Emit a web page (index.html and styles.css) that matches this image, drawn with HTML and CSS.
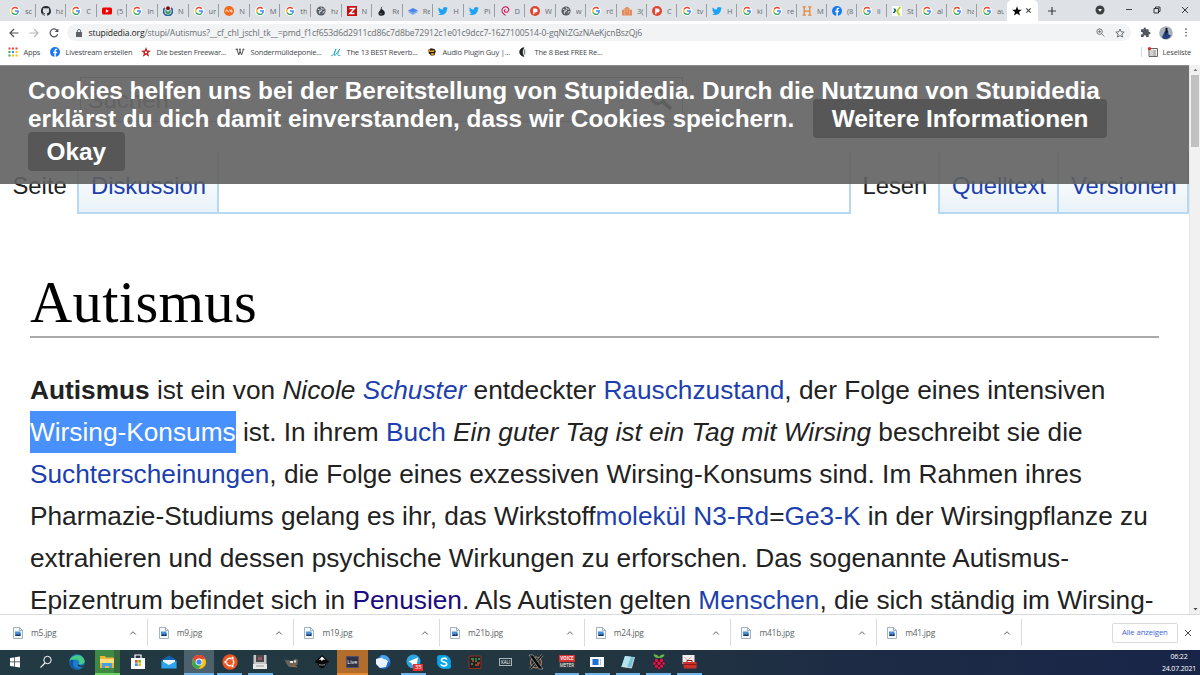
FILE: index.html
```html
<!DOCTYPE html>
<html lang="de">
<head>
<meta charset="utf-8">
<title>Autismus</title>
<link rel="stylesheet" href="styles.css">
</head>
<body>
<svg class="defs" aria-hidden="true">
  <symbol id="g" viewBox="0 0 16 16"><circle cx="8" cy="8" r="8" fill="#fff"/><g fill="none" stroke-width="2.2"><path d="M12.2 4.3A5.3 5.3 0 0 0 3.3 5.6" stroke="#ea4335"/><path d="M3.3 5.6a5.3 5.3 0 0 0 0 4.8" stroke="#fbbc05"/><path d="M3.3 10.4a5.3 5.3 0 0 0 8 1.9" stroke="#34a853"/><path d="M11.3 12.3A5 5 0 0 0 13.2 8H8" stroke="#4285f4"/></g></symbol>
  <symbol id="github" viewBox="0 0 16 16"><path fill="#24292e" d="M8 0a8 8 0 0 0-2.5 15.6c.4 0 .5-.2.5-.4v-1.500c-2.200.5-2.700-1-2.700-1-.4-.9-.9-1.200-.9-1.200-.7-.5.100-.5.100-.5.800.1 1.200.8 1.200.8.700 1.300 1.900.9 2.300.7.100-.5.300-.9.500-1.100-1.800-.2-3.600-.9-3.600-4 0-.9.300-1.600.8-2.100-.1-.200-.4-1 .1-2.100 0 0 .7-.2 2.200.8a7.600 7.600 0 0 1 4 0c1.500-1 2.200-.8 2.200-.8.500 1.100.2 1.900.1 2.100.5.600.8 1.300.8 2.100 0 3.100-1.900 3.800-3.700 4 .3.200.6.700.6 1.500v2.200c0 .2.100.5.600.4A8 8 0 0 0 8 0z"/></symbol>
  <symbol id="yt" viewBox="0 0 16 16"><rect y="2.500" width="16" height="11" rx="2.500" fill="#f00000"/><path d="M6.200 5.300v5.400L11 8z" fill="#fff"/></symbol>
  <symbol id="wm" viewBox="0 0 16 16"><path d="M3 3a7.200 7.200 0 1 0 10 0" fill="none" stroke="#255e95" stroke-width="2.500"/><path d="M4.500 5.500a4.500 4.500 0 1 0 7 0L8 10z" fill="#339966"/><circle cx="8" cy="3.500" r="3" fill="#990000"/></symbol>
  <symbol id="rs" viewBox="0 0 16 16"><circle cx="8" cy="8" r="8" fill="#f26a1b"/><path d="M3 9.500V6.500h2v1.500h2v2M8 6.500h2v3M13 6.500h-2v1.500h2v1.500h-2" fill="none" stroke="#fff" stroke-width="1"/></symbol>
  <symbol id="globe" viewBox="0 0 16 16"><circle cx="8" cy="8" r="7.300" fill="#53595f"/><path d="M3 5l3 1.500h3L8 9H5l1 3.500M8 2l1 2.500 4 .5M11 12l1-3h2" fill="none" stroke="#dee1e6" stroke-width="1.500"/></symbol>
  <symbol id="z" viewBox="0 0 16 16"><path d="M0 0h16v16H0z" fill="#c80e0e"/><path d="M4 4h8l-7.500 8H12" fill="none" stroke="#fff" stroke-width="2.300"/></symbol>
  <symbol id="drop" viewBox="0 0 16 16"><path d="M9 0L7 4c1 2 6 3 5.500 8-.5 4-8.500 5-10 1C1 9 7 7 6 3z" fill="#1e2328"/><path d="M4 11c1 2 3 2 4 1" stroke="#aaa" fill="none"/></symbol>
  <symbol id="layers" viewBox="0 0 16 16"><path d="M0 7l8-4 8 4-8 4z" fill="#4c85ed"/><path d="M1 8v2l7 4 7-4V8l-7 3.500z" fill="#6e9df1"/></symbol>
  <symbol id="tw" viewBox="0 0 16 16"><path fill="#1da1f2" d="M16 3.500l-1.700 1.400C14.500 10 10.500 14.500 5 14.500c-2 0-3.700-.5-5-1.400 1.800.1 3.400-.4 4.700-1.400-1.500 0-2.600-1-3-2.300h1.400C1.600 9 .6 7.700.6 6.200l1.400.4C.6 5.500.2 3.700 1.100 2.200c1.700 2 4 3.300 6.800 3.400C7.400 3.300 9 1.500 11.100 1.500c1 0 1.800.4 2.400 1l2-.7-1.300 1.900z"/></symbol>
  <symbol id="deb" viewBox="0 0 16 16"><path d="M9 15C4 12.500 1.500 8 4 4s8-3.500 9.500 0-1 6.500-4 6S6 6 9 5.500" fill="none" stroke="#cf1450" stroke-width="1.700"/></symbol>
  <symbol id="pat" viewBox="0 0 16 16"><circle cx="8" cy="8" r="8" fill="#e0452f"/><path d="M5 13V4h4a3 3 0 0 1 0 6.500H7V13z" fill="#fff"/></symbol>
  <symbol id="castle" viewBox="0 0 16 16"><path d="M0 6h4V3h2V1.500h4V3h2v3h4v9H0z" fill="#e38b5b"/><path d="M4 7v7M12 7v7M6.500 8.500h3M6 5h4" stroke="#f3c4a8" stroke-width=".8"/></symbol>
  <symbol id="h" viewBox="0 0 16 16"><path d="M1 1.500h5M10 1.500h5M1 14.500h5M10 14.500h5M3.500 1.500v13M12.500 1.500v13M3.500 8h9" stroke="#e2853b" stroke-width="2"/></symbol>
  <symbol id="fb" viewBox="0 0 16 16"><circle cx="8" cy="8" r="8" fill="#1877f2"/><path d="M7 16v-6H5V7.700h2V6c0-2.300 1.200-3.300 3-3.300l1.500.1v2h-1C9.500 4.800 9.300 5.400 9.300 6v1.700h2.200L11.100 10H9.300v6z" fill="#fff"/></symbol>
  <symbol id="xing" viewBox="0 0 16 16"><path d="M0 0h16v16H0z" fill="#fff"/><path d="M2 4h3l2 3-3 4H1l3-4z" fill="#006567"/><path d="M11.500 1h3.300L10 8.500l3.500 6.500h-3.300L6.700 8.500z" fill="#b8d30b"/></symbol>
  <symbol id="file" viewBox="0 0 10 12"><path d="M.5.5h6l3 3v8h-9z" fill="#f7fafc" stroke="#8da0af" stroke-width=".8"/><path d="M6.500.5v3h3" fill="none" stroke="#8da0af" stroke-width=".8"/><path d="M2 4.500h5.500v4.500H2z" fill="#4b8ed6"/><path d="M2 9l2-2 1.500 1L7.500 6v3z" fill="#173765"/></symbol>
  <symbol id="up" viewBox="0 0 8 8"><path d="M1.200 5.500L4 2.700l2.800 2.800" fill="none" stroke="#5f6368" stroke-width="1"/></symbol>
</svg>

<header class="tabstrip">
  <div class="tab"><svg><use href="#g"/></svg><span>sc</span></div>
  <div class="tab"><svg><use href="#github"/></svg><span>ha</span></div>
  <div class="tab"><svg><use href="#g"/></svg><span>C</span></div>
  <div class="tab"><svg><use href="#yt"/></svg><span>(5</span></div>
  <div class="tab"><svg><use href="#g"/></svg><span>in</span></div>
  <div class="tab"><svg><use href="#wm"/></svg><span>N</span></div>
  <div class="tab"><svg><use href="#g"/></svg><span>un</span></div>
  <div class="tab"><svg><use href="#rs"/></svg><span>N</span></div>
  <div class="tab"><svg><use href="#g"/></svg><span>M</span></div>
  <div class="tab"><svg><use href="#g"/></svg><span>th</span></div>
  <div class="tab"><svg><use href="#globe"/></svg><span>ha</span></div>
  <div class="tab"><svg><use href="#z"/></svg><span>N</span></div>
  <div class="tab"><svg><use href="#drop"/></svg><span>Re</span></div>
  <div class="tab"><svg><use href="#layers"/></svg><span>Re</span></div>
  <div class="tab"><svg><use href="#tw"/></svg><span>H</span></div>
  <div class="tab"><svg><use href="#tw"/></svg><span>Pi</span></div>
  <div class="tab"><svg><use href="#deb"/></svg><span>D</span></div>
  <div class="tab"><svg><use href="#pat"/></svg><span>W</span></div>
  <div class="tab"><svg><use href="#globe"/></svg><span>w</span></div>
  <div class="tab"><svg><use href="#g"/></svg><span>rö</span></div>
  <div class="tab narrow"><svg><use href="#castle"/></svg><span>3(</span></div>
  <div class="tab narrow"><svg><use href="#pat"/></svg><span>C</span></div>
  <div class="tab narrow"><svg><use href="#g"/></svg><span>tv</span></div>
  <div class="tab narrow"><svg><use href="#tw"/></svg><span>H</span></div>
  <div class="tab narrow"><svg><use href="#g"/></svg><span>ki</span></div>
  <div class="tab narrow"><svg><use href="#g"/></svg><span>re</span></div>
  <div class="tab narrow"><svg><use href="#h"/></svg><span>M</span></div>
  <div class="tab narrow"><svg><use href="#fb"/></svg><span>(8</span></div>
  <div class="tab narrow"><svg><use href="#g"/></svg><span>li</span></div>
  <div class="tab narrow"><svg><use href="#xing"/></svg><span>St</span></div>
  <div class="tab narrow"><svg><use href="#g"/></svg><span>al</span></div>
  <div class="tab narrow"><svg><use href="#g"/></svg><span>ha</span></div>
  <div class="tab narrow last"><svg><use href="#g"/></svg><span>au</span></div>
  <div class="tab-active">
    <svg class="star" viewBox="0 0 16 16"><path d="M8 .5l2 5.300 5.700.2-4.500 3.500 1.600 5.500L8 11.800 3.200 15l1.600-5.500L.3 6 6 5.800z"/></svg>
    <svg class="x" viewBox="0 0 8 8"><path d="M1.500 1.500l5 5M6.500 1.500l-5 5" stroke="#3c4043" stroke-width="1.200"/></svg>
  </div>
  <svg class="plus" viewBox="0 0 8 8"><path d="M4 0v8M0 4h8" stroke="#3c4043" stroke-width="1.200"/></svg>
  <div class="window-controls">
    <svg width="10" height="10" viewBox="0 0 10 10"><circle cx="5" cy="5" r="4.500" fill="#3c4043"/><path d="M3 4h4L5 6.700z" fill="#fff"/></svg>
    <svg width="8" height="8" viewBox="0 0 8 8"><path d="M1 3.500h6" stroke="#333" stroke-width=".9"/></svg>
    <svg width="8" height="8" viewBox="0 0 8 8"><path d="M1 2.500h4.500V7H1zM2.500 2.500V1H7v4.500H5.500" fill="none" stroke="#222" stroke-width=".9"/></svg>
    <svg width="8" height="8" viewBox="0 0 8 8"><path d="M1 1l6 6M7 1L1 7" stroke="#222" stroke-width=".9"/></svg>
  </div>
</header>

<div class="toolbar">
  <svg class="nav-back" viewBox="0 0 10 10"><path d="M9.500 5H1.300M5 1L1 5l4 4" fill="none" stroke="#4d5156" stroke-width="1.200"/></svg>
  <svg class="nav-fwd" viewBox="0 0 10 10"><path d="M.5 5h8.200M5 1l4 4-4 4" fill="none" stroke="#b5b8bb" stroke-width="1.200"/></svg>
  <svg class="nav-reload" viewBox="0 0 10 10"><path d="M8.600 6.300A3.900 3.900 0 1 1 8 2.400" fill="none" stroke="#4d5156" stroke-width="1.200"/><path d="M9.400.4v3.700H5.700z" fill="#4d5156"/></svg>
  <div class="omnibox">
    <svg class="lock" viewBox="0 0 6 8"><path d="M0 3h6v5H0z" fill="#5f6368"/><path d="M1.400 3.500V2a1.600 1.600 0 0 1 3.200 0v1.500" fill="none" stroke="#5f6368" stroke-width=".9"/></svg>
    <div class="url"><b>stupidedia.org</b><span>/stupi/Autismus?__cf_chl_jschl_tk__=pmd_f1cf653d6d2911cd86c7d8be72912c1e01c9dcc7-1627100514-0-gqNtZGzNAeKjcnBszQj6</span></div>
    <svg class="zoom" viewBox="0 0 10 10"><circle cx="4" cy="4" r="3" fill="none" stroke="#5f6368"/><path d="M6.300 6.300L9.300 9.300M2.500 4h3M4 2.500v3" stroke="#5f6368" stroke-width=".9"/></svg>
    <svg class="fav" viewBox="0 0 10 10"><path d="M5 1l1.200 2.800 3 .3-2.300 2 .7 3L5 7.500 2.400 9.100l.7-3-2.300-2 3-.3z" fill="none" stroke="#5f6368" stroke-width=".9"/></svg>
  </div>
  <svg class="puzzle" viewBox="0 0 24 24"><path d="M20.500 11H19V7c0-1.100-.9-2-2-2h-4V3.500a2.500 2.500 0 0 0-5 0V5H4c-1.100 0-2 .9-2 2v3.800h1.500a2.700 2.700 0 0 1 0 5.400H2V20c0 1.100.9 2 2 2h3.800v-1.500a2.700 2.700 0 0 1 5.400 0V22H17c1.100 0 2-.9 2-2v-4h1.500a2.500 2.500 0 0 0 0-5z" fill="#54585d"/></svg>
  <svg class="avatar" viewBox="0 0 14 14"><circle cx="7" cy="7" r="6.800" fill="#a9b1b8"/><path d="M3 11l2-4 1-2 3-.5.5 4L12 9.500a6 6 0 0 1-8 3z" fill="#24407f"/><path d="M6.500 2h2v4L6.500 9z" fill="#10131d"/></svg>
  <svg class="dots" viewBox="0 0 4 10"><g fill="#4d5156"><circle cx="2" cy="1.300" r=".9"/><circle cx="2" cy="5" r=".9"/><circle cx="2" cy="8.700" r=".9"/></g></svg>
</div>

<nav class="bookmarks">
  <a class="bm" style="width:42px"><svg viewBox="0 0 10 10"><g fill="#ea4335"><path d="M.5.500h2v2h-2zM4 .5h2v2H4zM7.500.500h2v2h-2z"/></g><path d="M.5 4h2v2h-2z" fill="#34a853"/><path d="M4 4h2v2H4z" fill="#4285f4"/><path d="M7.500 4h2v2h-2zM4 7.500h2v2H4zM7.500 7.500h2v2h-2z" fill="#fbbc05"/><path d="M.5 7.500h2v2h-2z" fill="#34a853"/></svg><span>Apps</span></a>
  <a class="bm" style="width:91px"><svg viewBox="0 0 16 16"><use href="#fb"/></svg><span>Livestream erstellen</span></a>
  <a class="bm" style="width:94px"><svg viewBox="0 0 16 16"><path d="M8 0l2.200 5.500 5.800.3-4.500 3.800L13 15.500 8 12.300l-5 3.200 1.500-5.900L0 5.800l5.800-.3z" fill="#c62828"/><circle cx="8" cy="8.500" r="1.700" fill="#fff"/></svg><span>Die besten Freewar...</span></a>
  <a class="bm" style="width:96px"><svg viewBox="0 0 16 16"><path d="M1 3.500h4M6.500 3.500h3M12 3.500h3M3 3.500l3 9L8 7l2.500 5.500L13.500 3.500M7.500 3.500L8.500 7" stroke="#222" stroke-width="1.300" fill="none"/></svg><span>Sondermülldeponie...</span></a>
  <a class="bm" style="width:96px"><svg viewBox="0 0 16 16"><path d="M0 14c4 0 5-4 8-11-2 5-3 8-2 11 2-2 5-7 8-11-3 6-4 9-2 11l3-1" stroke="#2fa9bd" stroke-width="1.500" fill="none"/></svg><span>The 13 BEST Reverb...</span></a>
  <a class="bm" style="width:92px"><svg viewBox="0 0 16 16"><path d="M2 5l4-3 6 1 2 4-2 6-5 1-4-4z" fill="#251a12"/><path d="M4 6l8-1-1 3H4zM6 10h6l-2 3H7z" fill="#e6a51e"/><path d="M1 4h4v3H2z" fill="#dc8c2a"/></svg><span>Audio Plugin Guy |...</span></a>
  <a class="bm" style="width:96px"><svg viewBox="0 0 16 16"><path d="M8 1a7 7 0 0 0 0 14c-3-4-3-10 0-14z" fill="#222" stroke="#222"/><path d="M8 4h2v8H8z" fill="#7a8a87"/></svg><span>The 8 Best FREE Re...</span></a>
  <div class="reading"><svg viewBox="0 0 10 10"><path d="M1 1.500h8.500v8H1z" fill="#eee" stroke="#555" stroke-width=".9"/><path d="M2.500 4h1M4.500 4H8M2.500 6h1M4.500 6H8M2.500 8h1M4.500 8H8" stroke="#555" stroke-width=".7"/><circle cx="1.500" cy="1.700" r="1.600" fill="#d93025"/></svg><span>Leseliste</span></div>
</nav>

<main class="viewport">
  <div class="page">
    <div class="search"><span>Suchen</span><svg viewBox="0 0 24 24"><circle cx="9" cy="9" r="6.500" fill="none" stroke="#555" stroke-width="3"/><path d="M14 14l8 7" stroke="#555" stroke-width="4"/></svg></div>
    <div class="page-tabs">
      <div class="pt current first">Seite</div>
      <div class="pt link disk">Diskussion</div>
      <div class="pt gap"></div>
      <div class="pt current lesen">Lesen</div>
      <div class="pt link quell">Quelltext</div>
      <div class="pt link vers">Versionen</div>
    </div>
    <article>
      <h1>Autismus</h1>
      <div class="text">
        <p><b>Autismus</b> ist ein von <i>Nicole <a>Schuster</a></i> entdeckter <a>Rauschzustand</a>, der Folge eines intensiven</p>
        <p><mark>Wirsing-Konsums</mark> ist. In ihrem <a>Buch</a> <i>Ein guter Tag ist ein Tag mit Wirsing</i> beschreibt sie die</p>
        <p><a>Suchterscheinungen</a>, die Folge eines exzessiven Wirsing-Konsums sind. Im Rahmen ihres</p>
        <p>Pharmazie-Studiums gelang es ihr, das Wirkstoff<a>molekül</a> <a>N3-Rd</a>=<a>Ge3-K</a> in der Wirsingpflanze zu</p>
        <p>extrahieren und dessen psychische Wirkungen zu erforschen. Das sogenannte Autismus-</p>
        <p>Epizentrum befindet sich in <a class="visited">Penusien</a>. Als Autisten gelten <a>Menschen</a>, die sich ständig im Wirsing-</p>
      </div>
    </article>
    <aside class="cookie">
      <div class="cookie-line">Cookies helfen uns bei der Bereitstellung von Stupidedia. Durch die Nutzung von Stupidedia</div>
      <div class="cookie-line">erklärst du dich damit einverstanden, dass wir Cookies speichern.<span class="btn more">Weitere Informationen</span></div>
      <span class="btn">Okay</span>
    </aside>
  </div>
  <div class="scrollbar">
    <svg viewBox="0 0 10 10"><path d="M2.800 6L5 3.500 7.200 6z" fill="#777"/></svg>
    <div class="thumb"></div>
    <svg class="down" viewBox="0 0 10 10"><path d="M2.800 4L5 6.500 7.200 4z" fill="#444"/></svg>
  </div>
</main>

<div class="downloads">
  <div class="dl"><svg class="f"><use href="#file"/></svg><span>m5.jpg</span><svg class="u"><use href="#up"/></svg></div>
  <div class="dl"><svg class="f"><use href="#file"/></svg><span>m9.jpg</span><svg class="u"><use href="#up"/></svg></div>
  <div class="dl"><svg class="f"><use href="#file"/></svg><span>m19.jpg</span><svg class="u"><use href="#up"/></svg></div>
  <div class="dl"><svg class="f"><use href="#file"/></svg><span>m21b.jpg</span><svg class="u"><use href="#up"/></svg></div>
  <div class="dl"><svg class="f"><use href="#file"/></svg><span>m24.jpg</span><svg class="u"><use href="#up"/></svg></div>
  <div class="dl"><svg class="f"><use href="#file"/></svg><span>m41b.jpg</span><svg class="u"><use href="#up"/></svg></div>
  <div class="dl"><svg class="f"><use href="#file"/></svg><span>m41.jpg</span><svg class="u"><use href="#up"/></svg></div>
  <div class="show-all">Alle anzeigen</div>
  <svg class="close" viewBox="0 0 8 8"><path d="M1 1l6 6M7 1L1 7" stroke="#444" stroke-width="1"/></svg>
</div>

<footer class="taskbar">
  <div class="app"><svg viewBox="0 0 16 16"><path d="M3 4l4-.6v4.200H3zM7.700 3.300L13 2.500v5.100H7.700zM3 8.300h4v4.200L3 12zM7.700 8.300H13v5.200l-5.300-.8z" fill="#fff"/></svg></div>
  <div class="app"><svg viewBox="0 0 16 16"><circle cx="9.500" cy="6" r="3.700" fill="none" stroke="#fff" stroke-width="1"/><path d="M7 9l-4.500 4.500" stroke="#fff" stroke-width="1.100"/></svg></div>
  <div class="app"><svg viewBox="0 0 16 16"><circle cx="8" cy="8" r="7.700" fill="#1a7fd0"/><path d="M.6 7C2 0 14 -1.500 15.700 7c.3 3-3.700 4-6 3 2-3-1-5-4-4.500C3 6 1.500 7 .6 7z" fill="#45cc84"/><path d="M5 7c-3 4 1 8 5.500 8-6 2-11-4-9.500-8 1-2 3-1.500 4 0z" fill="#1555a3"/><path d="M9 10c1.500 2 4.500 1.800 6 .5l-1 2.200c-3 1.200-6-.5-5-2.700z" fill="#223943"/></svg></div>
  <div class="app explorer"><svg viewBox="0 0 16 16"><path d="M1 2h5l1 1.500h8V14H1z" fill="#eeb43b"/><path d="M1 5h14v4H1z" fill="#ffdf7c"/><path d="M3 14V9h10v5h-3v-2H6v2z" fill="#4aa0dc"/></svg></div>
  <div class="app"><svg viewBox="0 0 16 16"><path d="M5 4V1h6v3" fill="none" stroke="#fff" stroke-width="1.200"/><path d="M1 4h14v11H1z" fill="#fff"/><path d="M5 6h2.700v2.700H5z" fill="#e64a2e"/><path d="M8.300 6H11v2.700H8.300z" fill="#7fba00"/><path d="M5 9.300h2.700V12H5z" fill="#1d9ce5"/><path d="M8.300 9.300H11V12H8.300z" fill="#f6b71d"/></svg></div>
  <div class="app"><svg viewBox="0 0 16 16"><path d="M.5 6L8 1.500 15.500 6v8H.5z" fill="#0f65ad"/><path d="M2 6h12v5H2z" fill="#eaf5ff"/><path d="M.5 7L8 11l7.500-4v7.500H.5z" fill="#2ca4ef"/></svg></div>
  <div class="app open chrome"><svg viewBox="0 0 16 16"><circle cx="8" cy="8" r="7" fill="#fbc116"/><path d="M2 4.500A7 7 0 0 1 14.300 5H8L5 9.500z" fill="#e84334"/><path d="M2 4.500A7 7 0 0 0 7.500 15l3.300-5H5z" fill="#35a853"/><circle cx="8" cy="8" r="3.400" fill="#fff"/><circle cx="8" cy="8" r="2.600" fill="#4285f4"/></svg></div>
  <div class="app open"><svg viewBox="0 0 16 16"><circle cx="8" cy="8" r="7.700" fill="#e95420"/><circle cx="8" cy="8" r="3.700" fill="none" stroke="#fff" stroke-width="1.500"/><g fill="#fff" stroke="#e95420" stroke-width=".5"><circle cx="3.500" cy="8" r="1.500"/><circle cx="10.500" cy="4" r="1.500"/><circle cx="10.500" cy="12" r="1.500"/></g></svg></div>
  <div class="app open"><svg viewBox="0 0 16 16"><path d="M1.500 1h13v10h-13z" fill="#c5c6c8"/><path d="M4 1h8v7H4z" fill="#4d464b"/><path d="M6 3h4v3H6z" fill="#8a5560"/><path d="M1 10h14v5H1z" fill="#e7e7e7"/><path d="M4 12h8" stroke="#999"/></svg></div>
  <div class="app"><svg viewBox="0 0 16 16"><path d="M1 4l2 2.500 2-.5 4 1 4-2.500 2 2-.5 4-3.500 2.500H6L3 9z" fill="#6b6558"/><path d="M7 7h3v2H7zM11 6.500h2v2h-2z" fill="#e8e8e8"/><path d="M9 12l5 1" stroke="#a8743e" stroke-width="1.100"/></svg></div>
  <div class="app"><svg viewBox="0 0 16 16"><path d="M8 1l7 6.500-1 1.500-3 .5 2 1.500-3 .5 1 1.500-3 1.500-3-1.500 1-1.500-3-.5 2-1.500L2 9 1 7.500z" fill="#080808"/><path d="M8 2.500l3.500 3.500L9 5.500 8 7 6.500 5.500 4.500 6.500z" fill="#fff"/><path d="M5 10.500l3 .7 3-.7" stroke="#ddd" fill="none" stroke-width=".6"/></svg></div>
  <div class="app live"><span>Live</span></div>
  <div class="app"><svg viewBox="0 0 16 16"><circle cx="8.500" cy="8" r="7" fill="#1f65cc"/><path d="M1 5l7-2 5 4-2 6-6 1-4-4z" fill="#e9f3fd"/><path d="M5 2c5-3 11 2 9.500 7-1-3-4-4-6-4z" fill="#4ba2eb"/></svg></div>
  <div class="app open"><svg viewBox="0 0 16 16"><circle cx="7.500" cy="7.500" r="7" fill="#2ca5df"/><path d="M2.500 7.500L12 3.500l-1.500 8.500-3-2.200-1.500 1.500L5.500 9z" fill="#fff"/></svg><span class="badge">35</span></div>
  <div class="app"><svg viewBox="0 0 16 16"><circle cx="8" cy="8" r="7" fill="#08a5ea"/><circle cx="4" cy="4" r="3" fill="#08a5ea"/><circle cx="12" cy="12" r="3" fill="#08a5ea"/><path d="M10.800 5.800C10 3.500 5.500 3.800 5.500 6.200S10.700 7.500 10.700 10c0 2.500-5 2.700-5.700.2" fill="none" stroke="#fff" stroke-width="1.700"/></svg></div>
  <div class="app"><svg viewBox="0 0 16 16"><path d="M2 2h12v12.500H2z" fill="#222" stroke="#8c3023"/><path d="M4 5h3M9 4v4M11 5h2M4 10h2" stroke="#39a861" stroke-width="1.300"/><path d="M5 7h2M8 11h4M10 9h3" stroke="#c43" stroke-width="1.300"/></svg></div>
  <div class="app"><span class="kali">KALI</span></div>
  <div class="app"><svg viewBox="0 0 16 16"><circle cx="8" cy="8.500" r="5.500" fill="none" stroke="#c97b42" stroke-width="1.100"/><path d="M14.500 1L2 15" stroke="#bbb" stroke-width="2.200"/><path d="M14.500 1L2 15" stroke="#111" stroke-width="1.300"/><path d="M1 1h4l10 14h-4z" fill="#090909" stroke="#bbb" stroke-width=".6"/></svg></div>
  <div class="app open"><div class="voice"><b>VOICE</b><i>METER</i></div></div>
  <div class="app open"><svg viewBox="0 0 16 16"><path d="M1 3h14v10H1z" fill="#f5f8fa"/><path d="M3.500 5h6v6h-6z" fill="#1f70d0"/><path d="M11.500 5v6" stroke="#b8c2ca" fill="none"/></svg></div>
  <div class="app open"><svg viewBox="0 0 16 16"><path d="M5 2l9.500 1L11.500 14l-10-1.500z" fill="#78c4d6"/><path d="M5 2l6 .7L7 13.300l-5.500-.8z" fill="#b6e4ec"/><path d="M1.500 12.500l10 1.500 3-11" fill="none" stroke="#e5edf0" stroke-width=".8"/></svg></div>
  <div class="app open"><svg viewBox="0 0 16 16"><path d="M8 4C6 4 3 3.500 2.500.5 5 .5 7.500 1 8 3.500 8.500 1 11 .5 13.500.5 13 3.500 10 4 8 4z" fill="#69b94a"/><path d="M4 5l8 0 2 4-2 4-4 3-4-3-2-4z" fill="#3b0919"/><g fill="#d51a52"><circle cx="5.500" cy="6.500" r="1.800"/><circle cx="10.500" cy="6.500" r="1.800"/><circle cx="8" cy="9.300" r="1.900"/><circle cx="3.500" cy="9.500" r="1.400"/><circle cx="12.500" cy="9.500" r="1.400"/><circle cx="5.500" cy="12.200" r="1.600"/><circle cx="10.500" cy="12.200" r="1.600"/><circle cx="8" cy="14.300" r="1.300"/></g></svg></div>
  <div class="app open"><svg viewBox="0 0 16 16"><path d="M1.500 1h12v9h-12z" fill="#eceff1"/><path d="M3.500 3l3 3 4-3" stroke="#d99" fill="none"/><path d="M2 8h13.500v6.500H3z" fill="#c9302a"/><path d="M6 8V6.500h5V8M2 10.500h13" fill="none" stroke="#8d1915"/></svg></div>
  <div class="clock"><span>06:22</span><span>24.07.2021</span></div>
</footer>
</body>
</html>
```
FILE: styles.css
```css
* { box-sizing: border-box; }
body { margin: 0; width: 1200px; height: 675px; overflow: hidden; display: flex; flex-direction: column; background: #fff; font-family: "Open Sans", "Noto Sans", sans-serif; font-size: 7.500px; color: #44474a; }
svg { display: block; flex: none; }
.defs { position: absolute; width: 0; height: 0; }

.tabstrip { height: 21px; flex: none; display: flex; align-items: center; background: #dee1e6; padding-left: 5px; }
.tab { width: 30.600px; height: 13px; flex: none; display: flex; align-items: center; padding-left: 5px; border-right: 1px solid #9b9fa4; }
.tab.narrow { width: 30px; }
.tab.last { border-right-color: transparent; }
.tab svg { width: 10px; height: 10px; }
.tab span { width: 7px; margin-left: 5px; overflow: hidden; white-space: nowrap; line-height: 12px; color: #666a6e; }
.tab-active { width: 31px; height: 21px; flex: none; display: flex; align-items: center; padding-left: 5px; background: #fff; border-radius: 5px 5px 0 0; }
.tab-active .star { width: 10px; height: 10px; }
.tab-active .x { width: 7px; height: 7px; margin-left: 3px; }
.plus { width: 8px; height: 8px; margin-left: 10px; }
.window-controls { display: flex; align-items: center; margin-left: 39.500px; gap: 20px; padding-bottom: 2px; }

.toolbar { height: 23px; flex: none; display: flex; align-items: center; }
.nav-back, .nav-fwd, .nav-reload { width: 10px; height: 10px; }
.nav-back { margin-left: 9px; }
.nav-fwd { margin-left: 10px; }
.nav-reload { margin-left: 10px; }
.omnibox { width: 1064px; height: 17px; margin-left: 8px; display: flex; align-items: center; background: #f1f3f4; border-radius: 9px; padding-left: 9px; }
.lock { width: 6px; height: 8px; }
.url { margin-left: 6.500px; width: 1007px; font-size: 8.600px; letter-spacing: -.122px; white-space: nowrap; color: #6c7074; }
.url b { font-weight: 400; color: #222; }
.zoom { width: 9px; height: 9px; margin-left: 0; }
.fav { width: 10px; height: 10px; margin-left: 10px; }
.puzzle { width: 11px; height: 11px; margin-left: 9px; }
.avatar { width: 14px; height: 14px; margin-left: 8px; }
.dots { width: 4px; height: 9px; margin-left: 11px; }

.bookmarks { height: 20.500px; flex: none; display: flex; align-items: center; padding-left: 8px; padding-bottom: 4px; letter-spacing: -.19px; }
.bm { display: flex; align-items: center; flex: none; white-space: nowrap; }
.bm svg { width: 10px; height: 10px; }
.bm span { margin-left: 5.500px; }
.reading { margin-left: auto; display: flex; align-items: center; border-left: 1px solid #d5d7da; height: 10px; padding: 0 9px 0 6px; }
.reading svg { width: 10px; height: 10px; margin-right: 5px; }

.viewport { height: 549.500px; flex: none; display: flex; overflow: hidden; }
.page { width: 1189px; flex: none; position: relative; overflow: hidden; font-family: "Liberation Sans", Arial, sans-serif; color: #222; }
.search { width: 603px; height: 45px; margin: 12px 0 0 79.500px; border: 1.500px solid #999; display: flex; justify-content: space-between; align-items: center; padding: 2px 9px 0 7px; font-size: 24px; color: #777; }
.search svg { width: 24px; height: 24px; }
.page-tabs { display: flex; margin-top: 30px; height: 62.500px; font-size: 23.800px; line-height: 27px; }
.pt { padding: 20px 0 0 12.500px; flex: none; border-bottom: 2px solid #b5d9f2; }
.current { border-bottom-color: transparent; }
.first { width: 77px; }
.link { color: #1d3fae; background: linear-gradient(#fff 20%, #e8f2f8); border-right: 2px solid #b5d9f2; }
.disk { width: 142px; border-left: 2px solid #b5d9f2; padding-left: 12px; }
.gap { width: 632px; border-right: 2px solid #b5d9f2; }
.lesen { width: 87px; padding-left: 11.500px; }
.quell { width: 121px; border-left: 2px solid #b5d9f2; padding-left: 12px; }
.vers { width: 130px; padding-left: 12px; }
article { padding: 0 30px 0 30px; }
h1 { margin: 54.500px 0 0; height: 69.500px; font: 400 58.500px/68px "Liberation Serif", serif; letter-spacing: .35px; color: #000; border-bottom: 2px solid #a9a9a9; }
.text { margin-top: 31px; }
p { margin: 0; height: 41.950px; font-size: 26.250px; line-height: 42.950px; white-space: nowrap; }
a { color: #1d3fae; }
.bm { color: inherit; }
.visited { color: #1b0b80; }
mark { display: inline-block; height: 42px; margin-top: -.5px; background: #4890fb; color: #fff; }

.cookie { position: absolute; left: 0; top: 0; width: 1189px; height: 119.500px; padding: 11.500px 28px; background: rgba(96, 96, 96, .9); border-top: 1px solid #8b8b8b; font-weight: 700; font-size: 24.360px; line-height: 27.600px; color: #fff; white-space: nowrap; }
.cookie-line { height: 27.600px; }
.btn { display: inline-block; padding: 5.500px 18.500px; border-radius: 4px; background: #575757; }
.more { margin: -5.500px 0 0 19px; vertical-align: top; }

.scrollbar { flex: 1; background: #f1f1f1; display: flex; flex-direction: column; align-items: center; border-left: 1px solid #e6e6e6; }
.scrollbar svg { width: 9px; height: 10px; }
.thumb { width: 8px; height: 72px; background: #c1c1c1; }
.scrollbar .down { margin-top: auto; }

.downloads { height: 36px; flex: none; display: flex; align-items: center; border-top: 1px solid #d8dadd; padding-left: 2.500px; font-size: 8.400px; letter-spacing: -.2px; color: #5b5f63; }
.dl { width: 145.700px; height: 27px; flex: none; display: flex; align-items: center; border-right: 1px solid #d8dadd; padding: 0 10px 0 10.500px; }
.f { width: 10px; height: 12px; }
.dl span { margin-left: 8px; }
.u { width: 8px; height: 8px; margin-left: auto; }
.show-all { width: 66px; height: 20px; margin-left: 89.500px; border: 1px solid #d8dadd; border-radius: 2px; color: #3b63d8; text-align: center; line-height: 17px; font-size: 7.700px; letter-spacing: -.1px; }
.close { width: 8px; height: 8px; margin-left: 6.500px; }

.taskbar { height: 25px; flex: none; display: flex; background: linear-gradient(90deg, #223a43, #223640 50%, #1d2b45 72%, #192548); color: #fff; }
.app { width: 30.650px; height: 25px; flex: none; display: flex; align-items: center; justify-content: center; position: relative; border-bottom: 2px solid transparent; }
.app svg { width: 16px; height: 16px; }
.open::after { content: ""; position: absolute; left: 3px; right: 3px; bottom: -2px; height: 2px; background: #6fb2e3; }
.chrome { background: #4c616c; }
.chrome::after { left: 0; right: 0; }
.explorer { background: linear-gradient(90deg, transparent 3px, #3e8a45 3px 22px, #37693f 22px 28px, transparent 28px); }
.explorer::after { content: ""; position: absolute; left: 3px; right: 3px; bottom: -2px; height: 2px; background: #6cd564; }
.live { background: #b26d2c; border-bottom-color: #e48a33; }
.live span { width: 13px; height: 12px; background: #303243; border: 1px solid #50506a; font-size: 5.500px; line-height: 10px; text-align: center; }
.badge { position: absolute; left: 15px; top: 14px; width: 10px; height: 7px; background: #e53030; font-size: 6px; line-height: 7px; text-align: center; }
.kali { width: 13px; height: 8px; border: 1px solid #aab4b9; font-size: 4.500px; line-height: 6px; text-align: center; }
.voice { width: 16px; text-align: center; font-size: 4.500px; line-height: 6px; }
.voice b { display: block; background: #dc2e2e; line-height: 7px; }
.voice i { display: block; font-style: normal; background: #323b40; }
.clock { margin-left: auto; width: 42px; display: flex; flex-direction: column; align-items: center; font-size: 7px; letter-spacing: -.15px; line-height: 11.500px; padding-top: 1px; }
```
